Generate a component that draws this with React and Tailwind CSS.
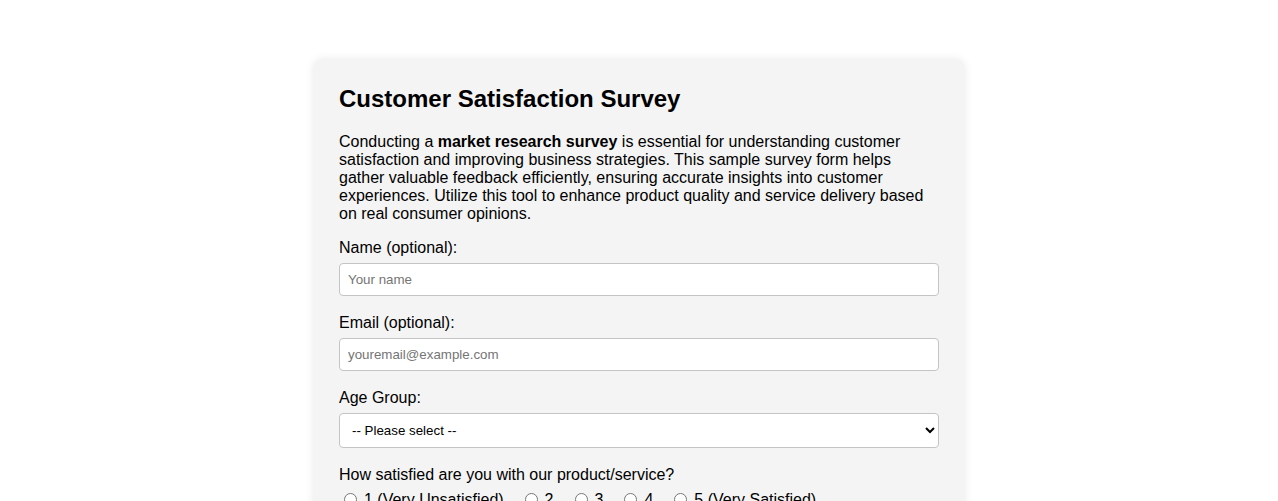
import { useState } from "react";

const ratings = [
  { value: "1", label: "1 (Very Unsatisfied)" },
  { value: "2", label: "2" },
  { value: "3", label: "3" },
  { value: "4", label: "4" },
  { value: "5", label: "5 (Very Satisfied)" },
];

function App() {
  const [rating, setRating] = useState("");

  return (
    <div className="min-h-screen bg-white pt-[60px] pb-10 text-black font-['Liberation_Sans',Arial,sans-serif]">
      <div className="mx-auto w-[650px] rounded-lg bg-[#f4f4f4] p-[25px] shadow-[0_0_10px_rgba(0,0,0,0.1)]">
        <h2 className="mb-[20px] text-[24px] font-bold leading-[27.6px]">Customer Satisfaction Survey</h2>
        <p className="mb-[16px] text-[16px] leading-[18px]">
          Conducting a <strong className="font-bold">market research survey</strong> is essential for understanding customer
          satisfaction and improving business strategies. This sample survey form helps gather valuable feedback efficiently,
          ensuring accurate insights into customer experiences. Utilize this tool to enhance product quality and service
          delivery based on real consumer opinions.
        </p>

        <form onSubmit={(e) => e.preventDefault()}>
          {/* Name */}
          <label htmlFor="name" className="mb-[6px] block text-[16px] leading-[18px]">Name (optional):</label>
          <input
            id="name"
            type="text"
            placeholder="Your name"
            className="mb-[18px] block h-[33px] w-full rounded-[4px] border border-[#c4c4c4] bg-white px-[8px] text-[13.33px] placeholder:text-[#757575] outline-none"
          />

          {/* Email */}
          <label htmlFor="email" className="mb-[6px] block text-[16px] leading-[18px]">Email (optional):</label>
          <input
            id="email"
            type="email"
            placeholder="youremail@example.com"
            className="mb-[18px] block h-[33px] w-full rounded-[4px] border border-[#c4c4c4] bg-white px-[8px] text-[13.33px] placeholder:text-[#757575] outline-none"
          />

          {/* Age */}
          <label htmlFor="age" className="mb-[6px] block text-[16px] leading-[18px]">Age Group:</label>
          <select
            id="age"
            defaultValue=""
            className="mb-[18px] block h-[35px] w-full rounded-[4px] border border-[#c4c4c4] bg-white px-[8px] text-[13.33px] outline-none"
          >
            <option value="">-- Please select --</option>
            <option value="18-24">18-24</option>
            <option value="25-34">25-34</option>
            <option value="35-44">35-44</option>
            <option value="45+">45+</option>
          </select>

          {/* Rating */}
          <label className="mb-[7px] block text-[16px] leading-[18px]">How satisfied are you with our product/service?</label>
          <div className="mb-[17px] flex flex-wrap text-[16px] leading-[18px]">
            {ratings.map((r) => (
              <label key={r.value} className="mr-[16px] inline-flex items-center">
                <input
                  type="radio"
                  name="rating"
                  value={r.value}
                  checked={rating === r.value}
                  onChange={() => setRating(r.value)}
                  className="ml-[5px] mr-[7px] h-[13px] w-[13px]"
                />
                {r.label}
              </label>
            ))}
          </div>

          <label htmlFor="comments" className="mb-[7px] block text-[16px] leading-[18px]">Additional Comments:</label>
          <textarea
            id="comments"
            rows={4}
            placeholder="Your feedback"
            className="mb-[17px] block w-full rounded-[4px] border border-[#c4c4c4] bg-white p-[8px] text-[13.33px] outline-none"
          />

          <button type="submit" className="rounded-[4px] bg-[#28a745] px-[20px] py-[10px] text-[16px] text-white">
            Submit
          </button>
        </form>
      </div>
    </div>
  );
}

export default App;
